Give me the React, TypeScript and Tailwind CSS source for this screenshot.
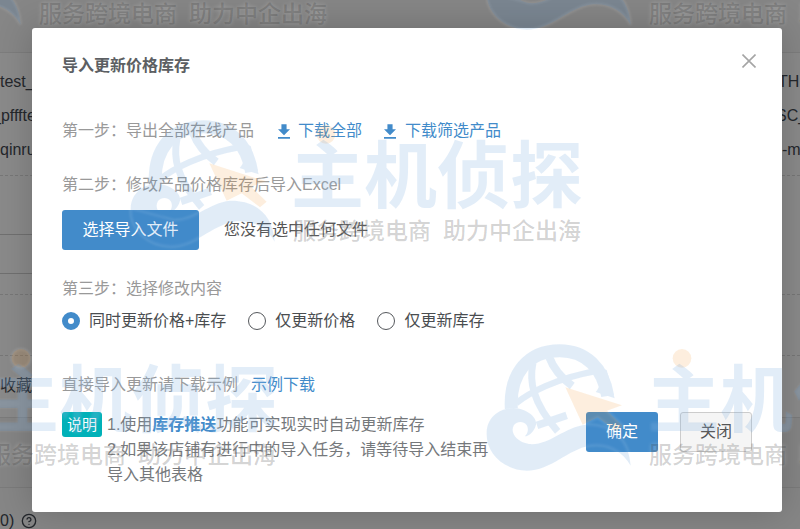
import React, { useState } from 'react';
import { CircleHelp } from 'lucide-react';

const OPTIONS = [
  { value: 'both', label: '同时更新价格+库存' },
  { value: 'price', label: '仅更新价格' },
  { value: 'stock', label: '仅更新库存' },
];

const DownloadIcon: React.FC = () => (
  <svg viewBox="5 3 14 17" className="h-[15px] w-3 shrink-0" fill="currentColor" aria-hidden="true">
    <path d="M5 20h14v-2H5zM19 9h-4V3H9v6H5l7 7z" />
  </svg>
);

const Globe: React.FC = () => (
  <>
    <g fill="none" stroke="currentColor">
      <path d="M154 236C148 130 205 62 299 62C378 62 430 115 443 198" strokeWidth="39" />
      <path d="M219 98C208 150 215 215 293 304" strokeWidth="21" />
      <path d="M268 82C280 115 302 142 337 168" strokeWidth="24" />
      <path d="M168 220C205 190 285 145 415 122" strokeWidth="19" />
      <path d="M231 286L320 256" strokeWidth="23" />
    </g>
    <g fill="currentColor">
      <path d="M398 104L440 120L464 205L407 186C414 178 419 170 417 160Z" />
      <path d="M80 307C82 262 116 235 160 234C204 236 232 264 228 284C224 303 207 319 194 319C204 310 207 295 199 284C190 273 172 273 162 285C149 307 168 336 207 342C266 348 311 291 378 284C454 282 507 326 512 407C484 358 437 340 389 347C324 358 274 421 200 422C128 419 77 368 80 307Z" />
    </g>
  </>
);

const Arrow: React.FC = () => (
  <>
    <path d="M316 172L486 226L441 242L488 287L468 304L413 262L368 284Z" />
    <circle cx="666" cy="85" r="28" />
  </>
);

const Watermark: React.FC<{ className: string }> = ({ className }) => (
  <div className={`absolute h-[135px] w-[463px] font-['Noto_Sans_CJK_SC',sans-serif] ${className}`}>
    <svg viewBox="72 30 1389 405" className="absolute inset-0 h-full w-full overflow-visible" aria-hidden="true">
      <g fill="none" stroke="#fff" strokeWidth="8" className="opacity-10 blur-[3px]">
        <path d="M135 238C127 130 202 42 298 42C392 42 461 112 464 205" />
        <path d="M80 307C82 262 116 235 160 234C204 236 232 264 228 284M207 342C266 348 311 291 378 284C454 282 507 326 512 407C484 358 437 340 389 347C324 358 274 421 200 422C128 419 77 368 80 307Z" />
        <Arrow />
      </g>
      <g className="text-[#3e87d0] opacity-15">
        <Globe />
      </g>
      <g fill="#f2942a" className="opacity-15">
        <Arrow />
      </g>
    </svg>
    <div className="absolute top-[12px] left-[163px] whitespace-nowrap text-[73px] leading-[84px] font-bold text-[#3e87d0]/15 [text-shadow:0_0_3px_rgba(255,255,255,0.12)]">
      主机侦探
    </div>
    <div className="absolute top-[96px] left-[165px] flex gap-3 whitespace-nowrap text-[23px] leading-[34px] font-medium text-[#222]/20 [text-shadow:0_0_4px_rgba(255,255,255,0.25)]">
      <span>服务跨境电商</span>
      <span>助力中企出海</span>
    </div>
  </div>
);

// Product list that stays dimmed behind the dialog
const DimmedPage: React.FC = () => (
  <div className="absolute inset-0 overflow-hidden bg-[#868686] text-[#24272c]" aria-hidden="true">
    <div className="h-[53px] border-b border-[#7d7d7d]" />
    <div className="bg-[#8a8a8a]">
      <div className="flex h-[123px] flex-col justify-center border-b border-dashed border-[#777] pt-1 leading-[34px]">
        <div className="flex justify-between"><span>test_</span><span className="w-[22px]">TH</span></div>
        <div className="flex justify-between"><span className="-ml-2">_pfffte</span><span className="w-6">SC_</span></div>
        <div className="flex justify-between"><span>qinru</span><span className="w-[18px] whitespace-nowrap">-m</span></div>
      </div>
      <div className="h-[119px] border-b border-dashed border-[#777] pt-[58px]">
        <div className="h-10 w-2/3 border-y border-[#707070]" />
      </div>
      <div className="h-[61px] border-b border-dashed border-[#777]" />
      <div className="h-[62px] border-b border-[#7b7b7b] pt-[18px]">收藏</div>
      <div className="h-[70px] border-b border-[#7b7b7b] bg-[#858585]" />
    </div>
    <div className="flex items-center gap-[7px] pt-[21px]">
      <span>0)</span>
      <CircleHelp className="size-4" strokeWidth={2} />
    </div>
  </div>
);

const App: React.FC = () => {
  const [mode, setMode] = useState('both');

  return (
    <div className="relative min-h-screen overflow-hidden pt-7 pr-[18px] pb-[17px] pl-8 font-['Liberation_Sans','Noto_Sans_CJK_SC',sans-serif] text-base leading-6">
      <DimmedPage />

      <section
        role="dialog"
        aria-labelledby="dialog-title"
        className="relative rounded-[3px] bg-white px-[30px] pt-[26px] pb-[25px] text-[#999] shadow-[0_0_36px_rgba(0,0,0,0.2)]"
      >
        <header className="flex items-center justify-between">
          <h1 id="dialog-title" className="font-bold text-[#5c5f63]">导入更新价格库存</h1>
          <button type="button" aria-label="关闭窗口" className="-mt-2.5 -mr-2 p-1 text-[#a5a5a5]">
            <svg viewBox="0 0 14 14" className="size-3.5" fill="none" stroke="currentColor" strokeWidth="1.6">
              <path d="M.5.5l13 13M13.5.5l-13 13" />
            </svg>
          </button>
        </header>

        <div className="mt-[41px] flex items-center">
          <p>第一步：导出全部在线产品</p>
          <a href="#all" className="ml-6 flex items-center gap-2 text-[#428bca]">
            <DownloadIcon />
            下载全部
          </a>
          <a href="#filtered" className="ml-[22px] flex items-center gap-[9px] text-[#428bca]">
            <DownloadIcon />
            下载筛选产品
          </a>
        </div>

        <p className="mt-[30px]">第二步：修改产品价格库存后导入Excel</p>
        <div className="mt-[13px] flex items-center gap-[25px]">
          <button type="button" className="h-10 w-[137px] rounded-[3px] bg-[#428bca] text-white">选择导入文件</button>
          <span className="text-[#555]">您没有选中任何文件</span>
        </div>

        <p className="mt-[27px]">第三步：选择修改内容</p>
        <div className="mt-2 flex gap-[22px] text-[#4a4d50]">
          {OPTIONS.map((option) => (
            <label key={option.value} className="flex items-center gap-[9px]">
              <input
                type="radio"
                name="mode"
                value={option.value}
                checked={mode === option.value}
                onChange={() => setMode(option.value)}
                className="size-[18px] appearance-none rounded-full border border-[#55585c] bg-white checked:border-[6px] checked:border-[#428bca]"
              />
              {option.label}
            </label>
          ))}
        </div>

        <p className="mt-10">
          直接导入更新请下载示例
          <a href="#example" className="ml-[13px] text-[#428bca]">示例下载</a>
        </p>

        <footer className="mt-[15px] flex items-start justify-between">
          <div className="flex items-start gap-[5px]">
            <span className="h-[25px] w-10 shrink-0 rounded-[3px] bg-[#00b1b8] text-center text-[15px] leading-[25px] text-white">说明</span>
            <div className="max-w-[395px] leading-[25px] text-[#75787b]">
              <p>
                1.使用<a href="#push" className="font-bold text-[#428bca]">库存推送</a>功能可实现实时自动更新库存
              </p>
              <p>2.如果该店铺有进行中的导入任务，请等待导入结束再导入其他表格</p>
            </div>
          </div>
          <div className="flex gap-[22px]">
            <button type="button" className="h-10 w-[72px] rounded-[3px] bg-[#428bca] text-white">确定</button>
            <button type="button" className="h-10 w-[72px] rounded-[3px] border border-[#ccc] bg-[#f5f5f5] text-[#555]">关闭</button>
          </div>
        </footer>
      </section>

      <div className="pointer-events-none absolute inset-0 overflow-hidden">
        <Watermark className="left-[-126px] top-[-101px]" />
        <Watermark className="left-[484px] top-[-101px]" />
        <Watermark className="left-[128px] top-[116px]" />
        <Watermark className="left-[-177px] top-[340px]" />
        <Watermark className="left-[484px] top-[340px]" />
      </div>
    </div>
  );
};

export default App;
